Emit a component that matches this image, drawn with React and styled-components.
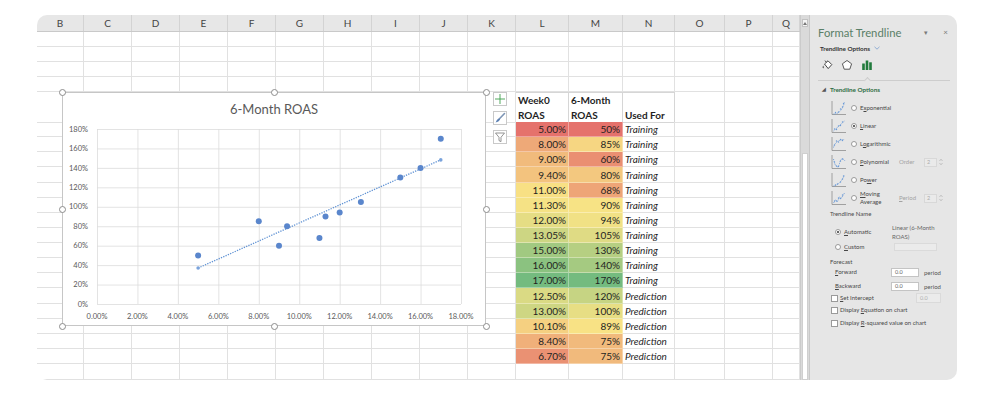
import React from 'react';
import styled, { createGlobalStyle } from 'styled-components';

const GRID = '#e1e1e1';

const COLUMNS = [
    ['B', 47], ['C', 48], ['D', 48], ['E', 48], ['F', 48], ['G', 48], ['H', 48], ['I', 48], ['J', 48], ['K', 48],
    ['L', 53], ['M', 54], ['N', 52], ['O', 50], ['P', 48], ['Q', 27],
];
const TEMPLATE = COLUMNS.map(c => `${c[1]}px`).join(' ');
const L_COL = 10;

const DATA = [
    [5.0, 50, 'Training'], [8.0, 85, 'Training'], [9.0, 60, 'Training'], [9.4, 80, 'Training'],
    [11.0, 68, 'Training'], [11.3, 90, 'Training'], [12.0, 94, 'Training'], [13.05, 105, 'Training'],
    [15.0, 130, 'Training'], [16.0, 140, 'Training'], [17.0, 170, 'Training'],
    [12.5, 120, 'Prediction'], [13.0, 100, 'Prediction'], [10.1, 89, 'Prediction'],
    [8.4, 75, 'Prediction'], [6.7, 75, 'Prediction'],
];

const LOW = [229, 114, 108];
const MID = [248, 227, 133];
const HIGH = [116, 187, 127];

const mix = (a, b, t) => a.map((v, i) => Math.round(v + (b[i] - v) * t));

const median = (list) => {
    const s = [...list].sort((a, b) => a - b);
    const m = s.length / 2;
    return s.length % 2 ? s[Math.floor(m)] : (s[m - 1] + s[m]) / 2;
};

const makeScale = (list) => {
    const min = Math.min(...list);
    const max = Math.max(...list);
    const mid = median(list);
    return (v) => {
        const c = v <= mid
            ? mix(LOW, MID, (v - min) / (mid - min))
            : mix(MID, HIGH, (v - mid) / (max - mid));
        return `rgb(${c.join(',')})`;
    };
};

const weekColor = makeScale(DATA.map(d => d[0]));
const roasColor = makeScale(DATA.map(d => d[1]));

// row heights below the table header, the screenshot is slightly scaled
const dataHeights = DATA.map((_, i) => Math.round((i + 1) * 15.125) - Math.round(i * 15.125));

const GlobalStyle = createGlobalStyle`
    * { box-sizing: border-box; }
    html, body { margin: 0; background: #ffffff; }
    body { font-family: Lato, "Liberation Sans", sans-serif; }
`;

const Page = styled.div`
    width: 1002px;
    height: 402px;
    padding: 15px 0 0 37px;
`;

const Card = styled.div`
    display: flex;
    width: 920px;
    height: 365px;
    border-radius: 10px;
    overflow: hidden;
    background: #ffffff;
`;

const Sheet = styled.div`
    display: flex;
    flex-direction: column;
    width: 763px;
`;

const ColHeads = styled.div`
    display: grid;
    grid-template-columns: ${TEMPLATE};
    height: 17px;
    flex: none;
    background: #e7e7e7;
    border-bottom: 1px solid #c9c9c9;
`;

const ColHead = styled.div`
    display: flex;
    align-items: center;
    justify-content: center;
    font-size: 10px;
    color: #444444;
    border-right: 1px solid #d3d3d3;
`;

const Grid = styled.div`
    position: relative;
    flex: 1;
    overflow: hidden;
`;

const Row = styled.div`
    display: grid;
    grid-template-columns: ${TEMPLATE};
    height: ${p => p.$h}px;
`;

const Cell = styled.div`
    display: flex;
    align-items: center;
    justify-content: ${p => (p.$right ? 'flex-end' : 'flex-start')};
    padding: 0 2px;
    background: ${p => p.$bg || 'transparent'};
    border-right: 1px solid ${p => (p.$bg ? 'rgba(255,255,255,0.35)' : GRID)};
    border-bottom: 1px solid ${p => (p.$bg ? 'rgba(255,255,255,0.35)' : GRID)};
    font-size: 10px;
    font-style: ${p => (p.$italic ? 'italic' : 'normal')};
    color: #1f1f1f;
    white-space: nowrap;
    overflow: hidden;
`;

const HeadCell = styled.div`
    display: flex;
    flex-direction: column;
    justify-content: flex-end;
    padding: 0 2px;
    border-right: 1px solid #d6d6d6;
    border-bottom: 1px solid #d6d6d6;
    border-top: 1px solid #d6d6d6;
    font-size: 10px;
    font-weight: 700;
    line-height: 14.5px;
    color: #1f1f1f;
    white-space: nowrap;
`;

const ChartFrame = styled.div`
    position: absolute;
    left: 25px;
    top: 60px;
    width: 424px;
    height: 234px;
`;

const Handle = styled.span`
    position: absolute;
    left: ${p => p.$x}px;
    top: ${p => p.$y}px;
    width: 7px;
    height: 7px;
    margin: -3.5px 0 0 -3.5px;
    border-radius: 50%;
    border: 1px solid #8d8d8d;
    background: #ffffff;
`;

const ChartTools = styled.div`
    position: absolute;
    left: 456px;
    top: 60px;
    display: flex;
    flex-direction: column;
    gap: 5px;
`;

const ToolButton = styled.div`
    width: 14px;
    height: 14px;
    border: 1px solid #c9c9c9;
    background: #ffffff;
    display: flex;
    align-items: center;
    justify-content: center;
`;

const ScrollBar = styled.div`
    width: 9px;
    display: flex;
    flex-direction: column;
    background: #dadada;
    border-left: 1px solid #cbcbcb;
`;

const ScrollUp = styled.div`
    height: 8px;
    margin: 4px 1px 0 1px;
    background: #f4f4f4;
    border: 1px solid #c2c2c2;
    display: flex;
    align-items: center;
    justify-content: center;
`;

const ScrollTrack = styled.div`
    height: 126px;
`;

const ScrollThumb = styled.div`
    flex: 1;
    margin: 0 1px;
    background: #ffffff;
    border: 1px solid #cfcfcf;
`;

const Panel = styled.div`
    width: 148px;
    display: flex;
    flex-direction: column;
    padding-top: 10px;
    background: #e6e6e6;
    border-left: 1px solid #c8c8c8;
    color: #474747;
    font-size: 6px;
`;

const PaneHead = styled.div`
    display: flex;
    align-items: center;
    height: 14px;
    padding: 0 9px 0 8px;
`;

const PaneTitle = styled.div`
    flex: 1;
    font-size: 11.3px;
    color: #5a8068;
    white-space: nowrap;
`;

const HeadGlyph = styled.span`
    font-size: ${p => p.$size}px;
    color: #7a7a7a;
    margin-left: ${p => p.$gap}px;
`;

const TabLabel = styled.div`
    display: flex;
    align-items: center;
    gap: 4px;
    height: 8px;
    margin-top: 5px;
    padding-left: 10px;
    font-size: 6.3px;
    font-weight: 700;
    color: #333333;
`;

const TabIcons = styled.div`
    display: flex;
    align-items: center;
    gap: 8px;
    height: 12px;
    margin-top: 7px;
    padding-left: 11px;
`;

const Divider = styled.div`
    position: relative;
    height: 1px;
    margin: 9px 7px 0 8px;
    background: #cdcdcd;

    &::after {
        content: '';
        position: absolute;
        left: 47px;
        top: -2px;
        width: 4px;
        height: 4px;
        background: #e6e6e6;
        border-left: 1px solid #cdcdcd;
        border-top: 1px solid #cdcdcd;
        transform: rotate(45deg);
    }
`;

const Section = styled.div`
    display: flex;
    align-items: center;
    height: 8px;
    margin-top: 4px;
    padding-left: 12px;
    font-size: 6.3px;
    font-weight: 700;
    color: #2e6c44;
`;

const Caret = styled.span`
    font-size: 4.5px;
    color: #555555;
    margin-right: 4px;
`;

const OptionList = styled.div`
    display: flex;
    flex-direction: column;
    margin-top: 6px;
    padding-left: 20px;
`;

const OptionRow = styled.div`
    display: flex;
    align-items: center;
    height: 18px;
`;

const Radio = styled.span`
    position: relative;
    flex: none;
    width: 6px;
    height: 6px;
    margin-right: 3px;
    border-radius: 50%;
    border: 0.7px solid #9a9a9a;
    background: #ffffff;

    &::after {
        content: '';
        display: ${p => (p.$on ? 'block' : 'none')};
        position: absolute;
        left: 1.3px;
        top: 1.3px;
        width: 2.2px;
        height: 2.2px;
        border-radius: 50%;
        background: #333333;
    }
`;

const Check = styled.span`
    flex: none;
    width: 7px;
    height: 7px;
    margin-right: 2px;
    border: 0.7px solid #9a9a9a;
    background: #ffffff;
`;

const Label = styled.span`
    flex: none;
    width: ${p => (p.$w ? `${p.$w}px` : 'auto')};
    line-height: 8px;
    color: ${p => (p.$muted ? '#a3a3a3' : '#474747')};
    white-space: nowrap;
`;

const SpinBox = styled.span`
    display: flex;
    align-items: center;
    width: 13px;
    height: 9px;
    padding-left: 2px;
    background: #eaeaea;
    border: 0.7px solid #d8d8d8;
    color: #aaaaaa;
    font-size: 5.5px;
`;

const Spinner = styled.svg`
    margin-left: 2px;
`;

const Caption = styled.div`
    display: flex;
    align-items: center;
    height: 8px;
    margin-top: ${p => p.$top}px;
    padding-left: 20px;
    color: #4a4a4a;
`;

const FieldRow = styled.div`
    display: flex;
    align-items: center;
    height: ${p => p.$h || 10}px;
    margin-top: ${p => p.$top || 0}px;
    padding-left: ${p => p.$indent || 25}px;
`;

const NameValue = styled.span`
    line-height: 9px;
    color: #666666;
`;

const Input = styled.span`
    display: flex;
    align-items: center;
    width: ${p => p.$w}px;
    height: ${p => p.$h || 9}px;
    padding-left: 3px;
    background: ${p => (p.$disabled ? '#ebebeb' : '#ffffff')};
    border: 0.7px solid ${p => (p.$disabled ? '#dadada' : '#c4c4c4')};
    color: ${p => (p.$disabled ? '#b0b0b0' : '#666666')};
    font-size: 5.5px;
`;

const Unit = styled.span`
    margin-left: 5px;
    color: #555555;
`;

// chart geometry in chart-frame pixels
const PL = 35;
const PR = 399;
const PT = 37;
const PB = 212;
const sx = v => PL + (v / 18) * (PR - PL);
const sy = v => PB - (v / 180) * (PB - PT);

const training = DATA.filter(d => d[2] === 'Training');

const regression = () => {
    const n = training.length;
    const mx = training.reduce((s, d) => s + d[0], 0) / n;
    const my = training.reduce((s, d) => s + d[1], 0) / n;
    let sxy = 0;
    let sxx = 0;
    training.forEach(([x, y]) => {
        sxy += (x - mx) * (y - my);
        sxx += (x - mx) * (x - mx);
    });
    const slope = sxy / sxx;
    return x => my + slope * (x - mx);
};

const trend = regression();

const ScatterChart = () => {
    const yTicks = [0, 20, 40, 60, 80, 100, 120, 140, 160, 180];
    const xTicks = [0, 2, 4, 6, 8, 10, 12, 14, 16, 18];
    const x0 = 5;
    const x1 = 17;
    return (
        <svg width="424" height="234" viewBox="0 0 424 234">
            <rect x="0.5" y="0.5" width="423" height="233" fill="#ffffff" stroke="#c6c6c6" />
            <text x="212" y="21.5" textAnchor="middle" fontSize="13" fill="#595959" fontFamily="Lato, sans-serif">
                6-Month ROAS
            </text>
            {yTicks.map(v => (
                <line key={`h${v}`} x1={PL} x2={PR} y1={sy(v) + 0.5} y2={sy(v) + 0.5} stroke="#dcdcdc" strokeWidth="0.8" />
            ))}
            {xTicks.map(v => (
                <line key={`v${v}`} x1={sx(v) + 0.5} x2={sx(v) + 0.5} y1={PT} y2={PB} stroke="#dcdcdc" strokeWidth="0.8" />
            ))}
            {yTicks.map(v => (
                <text key={`yl${v}`} x="26" y={sy(v) + 2.7} textAnchor="end" fontSize="7.5" fill="#595959" fontFamily="Lato, sans-serif">
                    {`${v}%`}
                </text>
            ))}
            {xTicks.map(v => (
                <text key={`xl${v}`} x={sx(v)} y="226.5" textAnchor="middle" fontSize="7.5" fill="#595959" fontFamily="Lato, sans-serif">
                    {`${v.toFixed(2)}%`}
                </text>
            ))}
            <line
                x1={sx(x0)}
                y1={sy(trend(x0))}
                x2={sx(x1)}
                y2={sy(trend(x1))}
                stroke="#6193d4"
                strokeWidth="1.3"
                strokeDasharray="1.3 1.2"
            />
            <circle cx={sx(x0)} cy={sy(trend(x0))} r="1.8" fill="#7aa3dc" />
            <circle cx={sx(x1)} cy={sy(trend(x1))} r="1.8" fill="#7aa3dc" />
            {training.map(([x, y]) => (
                <circle key={`p${x}`} cx={sx(x)} cy={sy(y)} r="3" fill="#5a86cc" />
            ))}
        </svg>
    );
};

const HANDLES = [[0, 0], [212, 0], [424, 0], [0, 117], [424, 117], [0, 234], [212, 234], [424, 234]];

const PlusIcon = () => (
    <svg width="12" height="12" viewBox="0 0 12 12">
        <path d="M6 1 V11 M1 6 H11" stroke="#3e9f4c" strokeWidth="0.9" />
    </svg>
);

const BrushIcon = () => (
    <svg width="12" height="12" viewBox="0 0 12 12">
        <path d="M10.5 1.5 L5.2 7" stroke="#7d95b5" strokeWidth="1.6" strokeLinecap="round" />
        <path d="M5.2 6.3 Q2.6 7 1.6 10.6 Q4.8 10 6.2 7.6 Z" fill="#5a7fb3" />
    </svg>
);

const FilterIcon = () => (
    <svg width="12" height="12" viewBox="0 0 12 12">
        <path d="M1.5 2 H10.5 L7 6.3 V10.6 L5 9.6 V6.3 Z" fill="none" stroke="#7a7a7a" strokeWidth="0.8" />
    </svg>
);

const BucketIcon = () => (
    <svg width="12" height="12" viewBox="0 0 12 12">
        <path d="M3.5 5 L7 1.8 L10.8 5.6 L7.2 9.6 Z" fill="#ffffff" stroke="#333333" strokeWidth="0.9" />
        <path d="M5.4 3.3 L4 1.6" stroke="#333333" strokeWidth="0.9" />
        <path d="M2.2 6.6 Q0.9 8.6 2.2 9.6 Q3.4 8.6 2.2 6.6 Z" fill="#333333" />
    </svg>
);

const PentagonIcon = () => (
    <svg width="12" height="12" viewBox="0 0 12 12">
        <path d="M6 1.5 L10.6 4.8 L8.8 10.2 L3.2 10.2 L1.4 4.8 Z" fill="#ffffff" stroke="#4a4a4a" strokeWidth="0.9" />
    </svg>
);

const BarsIcon = () => (
    <svg width="12" height="12" viewBox="0 0 12 12">
        <rect x="1.2" y="4.5" width="2.6" height="6.5" fill="#217a3c" />
        <rect x="4.7" y="1.5" width="2.6" height="9.5" fill="#217a3c" />
        <rect x="8.2" y="3.3" width="2.6" height="7.7" fill="#217a3c" />
    </svg>
);

const ChevronIcon = () => (
    <svg width="6" height="4" viewBox="0 0 6 4">
        <path d="M0.5 0.8 L3 3.2 L5.5 0.8" fill="none" stroke="#6b95cc" strokeWidth="0.7" />
    </svg>
);

const CURVES = {
    exp: 'M3 14 Q11 14 14 2',
    lin: 'M3 13 L14 3',
    log: 'M3 11.5 Q5 4 14 3.5',
    poly: 'M3 5 C5 15 8 14 9 9.5 S12 3 14.5 7',
    pow: 'M3 14 Q10 12.5 14 3',
    avg: 'M3 13 L5 10 L7 11.5 L9 7 L11 8 L14 3',
};

const DOTS = {
    exp: [[5, 12.5], [8, 12], [10, 9], [12, 7], [13, 3.5]],
    lin: [[4, 11], [6, 11.5], [8, 8], [10, 7.5], [12, 4]],
    log: [[4, 9], [6, 5], [8, 6], [10, 3.5], [12, 4.5]],
    poly: [[4, 8], [6, 12], [8, 12.5], [10, 7], [12, 5]],
    pow: [[5, 13], [7, 12], [10, 10], [12, 7], [13, 4]],
    avg: [[4, 11], [6, 11], [8, 8], [10, 8.5], [12, 5]],
};

const ThumbSvg = styled.svg`
    flex: none;
    margin-right: 4px;
`;

const TrendThumb = ({ kind }) => (
    <ThumbSvg width="17" height="16" viewBox="0 0 16 16">
        <path d="M1.5 1 V14.5 H15.5" fill="none" stroke="#8e8e8e" strokeWidth="0.8" />
        <path d={CURVES[kind]} fill="none" stroke="#5a8fd3" strokeWidth="0.8" strokeDasharray="1 0.8" />
        {DOTS[kind].map(([x, y]) => (
            <circle key={`${x}-${y}`} cx={x} cy={y} r="0.7" fill="#6b9bd8" />
        ))}
    </ThumbSvg>
);

const SpinArrows = () => (
    <Spinner width="4" height="8" viewBox="0 0 4 8">
        <path d="M0.5 3 L2 1.2 L3.5 3" fill="none" stroke="#a8a8a8" strokeWidth="0.6" />
        <path d="M0.5 5 L2 6.8 L3.5 5" fill="none" stroke="#a8a8a8" strokeWidth="0.6" />
    </Spinner>
);

const OPTIONS = [
    { kind: 'exp', label: <>E<u>x</u>ponential</> },
    { kind: 'lin', label: <><u>L</u>inear</>, on: true },
    { kind: 'log', label: <>L<u>o</u>garithmic</> },
    { kind: 'poly', label: <><u>P</u>olynomial</>, extra: 'Order' },
    { kind: 'pow', label: <>Po<u>w</u>er</> },
    { kind: 'avg', label: <><u>M</u>oving<br />Average</>, extra: <><u>P</u>eriod</> },
];

const emptyRow = (key, h) => (
    <Row key={key} $h={h}>
        {COLUMNS.map(([col]) => <Cell key={col} />)}
    </Row>
);

const App = () => (
    <>
        <GlobalStyle />
        <Page>
            <Card>
                <Sheet>
                    <ColHeads>
                        {COLUMNS.map(([col]) => <ColHead key={col}>{col}</ColHead>)}
                    </ColHeads>
                    <Grid>
                        {[0, 1, 2, 3].map(i => emptyRow(`top${i}`, 15))}
                        <Row $h={30}>
                            {COLUMNS.map(([col], i) => {
                                if (i === L_COL) return <HeadCell key={col}><span>Week0</span><span>ROAS</span></HeadCell>;
                                if (i === L_COL + 1) return <HeadCell key={col}><span>6-Month</span><span>ROAS</span></HeadCell>;
                                if (i === L_COL + 2) return <HeadCell key={col}><span>Used For</span></HeadCell>;
                                return <Cell key={col} />;
                            })}
                        </Row>
                        {DATA.map(([week, roas, use], r) => (
                            <Row key={`d${r}`} $h={dataHeights[r]}>
                                {COLUMNS.map(([col], i) => {
                                    if (i === L_COL) return <Cell key={col} $right $bg={weekColor(week)}>{`${week.toFixed(2)}%`}</Cell>;
                                    if (i === L_COL + 1) return <Cell key={col} $right $bg={roasColor(roas)}>{`${roas}%`}</Cell>;
                                    if (i === L_COL + 2) return <Cell key={col} $italic>{use}</Cell>;
                                    return <Cell key={col} />;
                                })}
                            </Row>
                        ))}
                        {emptyRow('tail', 16)}

                        <ChartFrame>
                            <ScatterChart />
                            {HANDLES.map(([x, y]) => <Handle key={`${x}-${y}`} $x={x} $y={y} />)}
                        </ChartFrame>
                        <ChartTools>
                            <ToolButton><PlusIcon /></ToolButton>
                            <ToolButton><BrushIcon /></ToolButton>
                            <ToolButton><FilterIcon /></ToolButton>
                        </ChartTools>
                    </Grid>
                </Sheet>

                <ScrollBar>
                    <ScrollUp>
                        <svg width="4" height="3" viewBox="0 0 4 3"><path d="M0 3 L2 0 L4 3 Z" fill="#777777" /></svg>
                    </ScrollUp>
                    <ScrollTrack />
                    <ScrollThumb />
                </ScrollBar>

                <Panel>
                    <PaneHead>
                        <PaneTitle>Format Trendline</PaneTitle>
                        <HeadGlyph $size={7}>▾</HeadGlyph>
                        <HeadGlyph $size={8} $gap={15}>×</HeadGlyph>
                    </PaneHead>
                    <TabLabel>
                        Trendline Options
                        <ChevronIcon />
                    </TabLabel>
                    <TabIcons>
                        <BucketIcon />
                        <PentagonIcon />
                        <BarsIcon />
                    </TabIcons>
                    <Divider />
                    <Section>
                        <Caret>◢</Caret>
                        Trendline Options
                    </Section>
                    <OptionList>
                        {OPTIONS.map(opt => (
                            <OptionRow key={opt.kind}>
                                <TrendThumb kind={opt.kind} />
                                <Radio $on={opt.on} />
                                <Label $w={39}>{opt.label}</Label>
                                {opt.extra && (
                                    <>
                                        <Label $w={25} $muted>{opt.extra}</Label>
                                        <SpinBox>2</SpinBox>
                                        <SpinArrows />
                                    </>
                                )}
                            </OptionRow>
                        ))}
                    </OptionList>
                    <Caption $top={2}>Trendline Name</Caption>
                    <FieldRow $h={20} $top={5}>
                        <Radio $on />
                        <Label $w={48}><u>A</u>utomatic</Label>
                        <NameValue>Linear (6-Month<br />ROAS)</NameValue>
                    </FieldRow>
                    <FieldRow>
                        <Radio />
                        <Label $w={50}><u>C</u>ustom</Label>
                        <Input $w={43} $h={8} $disabled />
                    </FieldRow>
                    <Caption $top={5}>Forecast</Caption>
                    <FieldRow $top={2}>
                        <Label $w={56}><u>F</u>orward</Label>
                        <Input $w={28}>0.0</Input>
                        <Unit>period</Unit>
                    </FieldRow>
                    <FieldRow $top={4}>
                        <Label $w={56}><u>B</u>ackward</Label>
                        <Input $w={28}>0.0</Input>
                        <Unit>period</Unit>
                    </FieldRow>
                    <FieldRow $top={2} $indent={21}>
                        <Check />
                        <Label $w={76}><u>S</u>et Intercept</Label>
                        <Input $w={25} $h={10} $disabled>0.0</Input>
                    </FieldRow>
                    <FieldRow $top={2} $indent={21}>
                        <Check />
                        <Label>Display <u>E</u>quation on chart</Label>
                    </FieldRow>
                    <FieldRow $top={3} $indent={21}>
                        <Check />
                        <Label>Display <u>R</u>-squared value on chart</Label>
                    </FieldRow>
                </Panel>
            </Card>
        </Page>
    </>
);

export default App;
